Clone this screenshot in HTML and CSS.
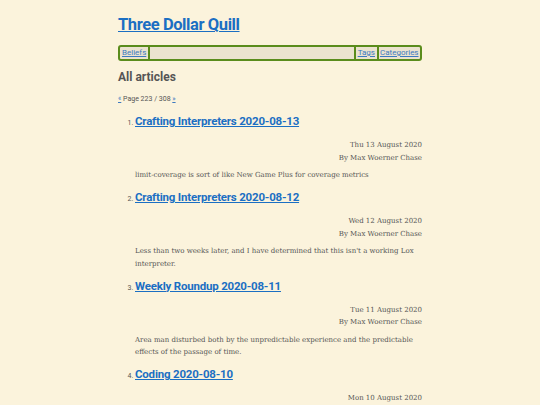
FILE: index.html
```html
<!DOCTYPE html>
<html lang="en">
<head>
<meta charset="utf-8">
<title>Three Dollar Quill</title>
<link rel="stylesheet" href="styles.css">
</head>
<body>
<div class="page">
  <header class="site-header">
    <h1 class="site-title"><a href="#">Three Dollar Quill</a></h1>
    <nav class="nav">
      <a class="nav-link nav-left" href="#">Beliefs</a>
      <span class="nav-spacer"></span>
      <a class="nav-link nav-right" href="#">Tags</a>
      <a class="nav-link nav-right" href="#">Categories</a>
    </nav>
  </header>
  <main>
    <h2 class="section-title">All articles</h2>
    <p class="pager"><a href="#">«</a> Page 223 / 308 <a href="#">»</a></p>
    <ol class="articles">
      <li class="article">
        <h3 class="article-title"><a href="#">Crafting Interpreters 2020-08-13</a></h3>
        <div class="meta">
          <div>Thu 13 August 2020</div>
          <div>By Max Woerner Chase</div>
        </div>
        <p class="summary">limit-coverage is sort of like New Game Plus for coverage metrics</p>
      </li>
      <li class="article">
        <h3 class="article-title"><a href="#">Crafting Interpreters 2020-08-12</a></h3>
        <div class="meta">
          <div>Wed 12 August 2020</div>
          <div>By Max Woerner Chase</div>
        </div>
        <p class="summary">Less than two weeks later, and I have determined that this isn't a working Lox interpreter.</p>
      </li>
      <li class="article">
        <h3 class="article-title"><a href="#">Weekly Roundup 2020-08-11</a></h3>
        <div class="meta">
          <div>Tue 11 August 2020</div>
          <div>By Max Woerner Chase</div>
        </div>
        <p class="summary">Area man disturbed both by the unpredictable experience and the predictable effects of the passage of time.</p>
      </li>
      <li class="article">
        <h3 class="article-title"><a href="#">Coding 2020-08-10</a></h3>
        <div class="meta">
          <div>Mon 10 August 2020</div>
          <div>By Max Woerner Chase</div>
        </div>
        <p class="summary">More work on the interpreter.</p>
      </li>
    </ol>
  </main>
</div>
</body>
</html>
```

FILE: styles.css
```css
html, body {
  margin: 0;
  padding: 0;
  background: #fbf3dc;
}
body {
  font-family: "DejaVu Serif", serif;
  color: #555;
}
.page {
  width: 304px;
  margin: 0 auto;
  padding-top: 14px;
}
.site-title {
  margin: 0;
  font-family: "Roboto", sans-serif;
  font-weight: 700;
  font-size: 16.5px;
  line-height: 22px;
  letter-spacing: -0.4px;
}
.site-title a, .article-title a {
  color: #1b6fc3;
}
.nav {
  display: flex;
  margin-top: 9px;
  height: 12px;
  border: 2px solid #5a8c1c;
  border-radius: 3px;
  background: #ebe3cf;
  font-family: "Roboto", sans-serif;
  font-size: 8px;
  line-height: 12px;
}
.nav-link {
  color: #3d7ac0;
  padding: 0 2px;
}
.nav-left {
  border-right: 2px solid #5a8c1c;
}
.nav-right {
  border-left: 2px solid #5a8c1c;
  padding: 0 1.5px;
}
.nav-spacer {
  flex: 1;
}
.section-title {
  margin: 8px 0 0;
  font-family: "Roboto", sans-serif;
  font-size: 12px;
  line-height: 16px;
  font-weight: 700;
  color: #555;
}
.pager {
  margin: 9px 0 0;
  font-family: "Roboto", sans-serif;
  font-size: 7px;
  line-height: 10px;
  color: #555;
}
.pager a {
  color: #3d7ac0;
}
.articles {
  margin: 8px 0 0;
  padding-left: 17px;
  font-size: 7px;
}
.article::marker {
  font-family: "Roboto", sans-serif;
  color: #555;
}
.article-title {
  margin: 0;
  font-family: "Roboto", sans-serif;
  font-size: 11.5px;
  line-height: 18px;
  font-weight: 700;
  letter-spacing: -0.2px;
}
.meta {
  margin-top: 9px;
  text-align: right;
  font-size: 7px;
  line-height: 12.5px;
  color: #555;
}
.summary {
  margin: 5px 0 0;
  font-size: 7px;
  line-height: 12.5px;
  color: #555;
  padding-bottom: 6.5px;
}
```
